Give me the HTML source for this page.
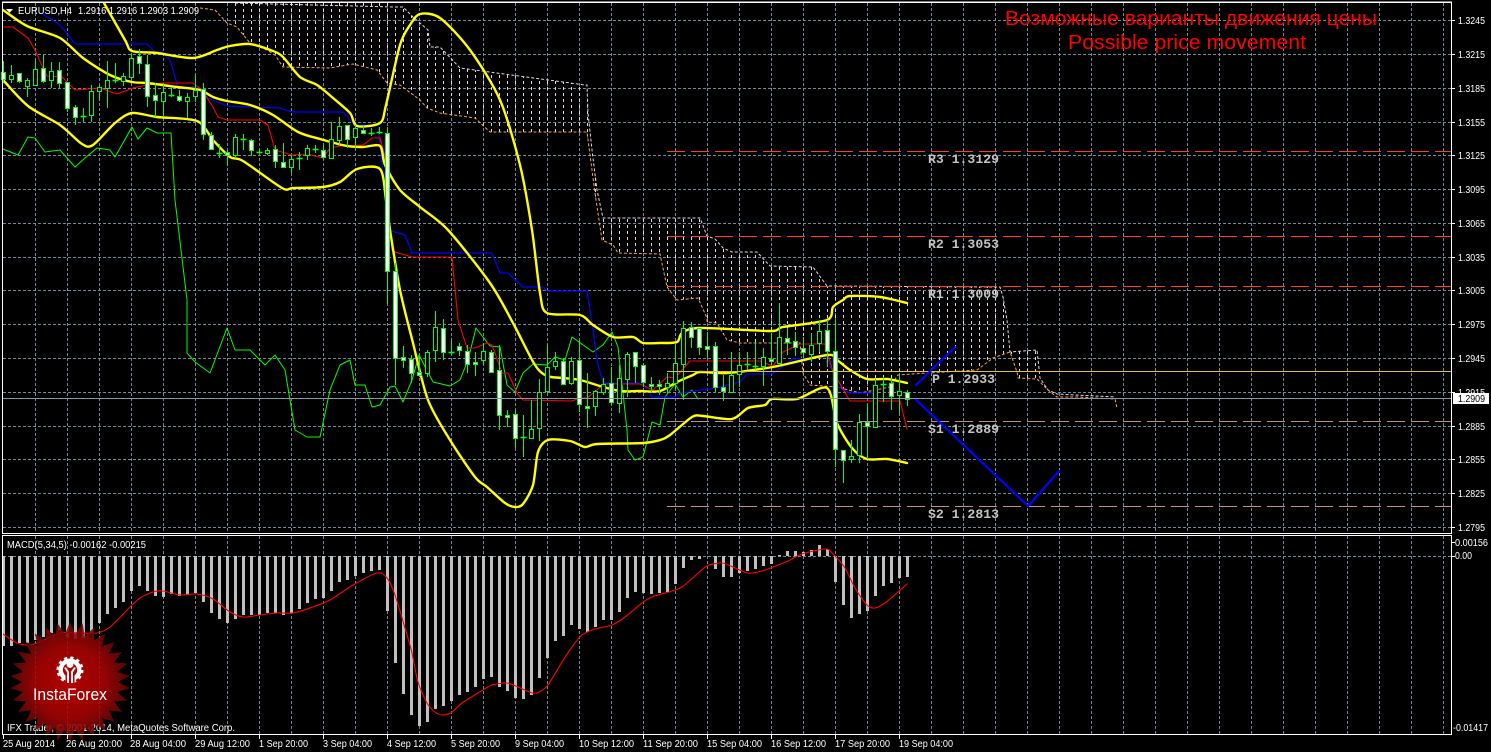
<!DOCTYPE html>
<html><head><meta charset="utf-8"><title>EURUSD,H4</title>
<style>
html,body{margin:0;padding:0;background:#000;width:1491px;height:752px;overflow:hidden}
svg{display:block}
text{font-family:"Liberation Sans",sans-serif;fill:#fff;font-size:10px}
.m{font-family:"Liberation Mono",monospace;font-weight:bold;font-size:13.3px;fill:#c4c4c4}
.t{font-size:20px;fill:#f00}
.l{fill:none;stroke-linejoin:round;stroke-linecap:round}
.y{stroke:#ff0;stroke-width:2.4}
.r{stroke:#f00;stroke-width:1.1}
.b{stroke:#00f;stroke-width:1.2}
.g{stroke:#0f0;stroke-width:1}
.c{fill:none;stroke-width:1;stroke-dasharray:3 2}
</style></head><body>
<svg xmlns="http://www.w3.org/2000/svg" width="1491" height="752" viewBox="0 0 1491 752">
<defs>
<clipPath id="cc"><polygon points="235,2 395,2 395,7 403,7 413,17 428,30 430,47 440,47 460,68 585,85 587,85 588,113 592,150 597,190 603,218 700,218 707,236 715,239 723,248 732,252 757,252 770,266 813,267 827,286 1000,287 1003,297 1007,320 1010,352 1037,350 1040,378 1018,378 1010,352 993,358 977,370 927,373 898,375 890,387 860,393 837,387 810,385 803,373 800,343 740,343 727,340 717,323 707,322 707,318 698,298 677,300 667,287 660,254 618,253 613,245 602,240 595,193 587,132 490,132 475,118 440,113 427,108 420,100 400,85 387,83 377,70 353,64 330,68 283,67 275,55 267,50 250,43 237,27 235,26"/></clipPath>
<radialGradient id="lg" cx="50%" cy="50%" r="50%"><stop offset="0" stop-color="#cc0000"/><stop offset=".6" stop-color="#a80404"/><stop offset="1" stop-color="#5e0808"/></radialGradient>
</defs>
<rect width="1491" height="752" fill="#000"/>
<g id="grid" stroke="#778899" stroke-width="1" stroke-dasharray="3 2"></g>
<g id="cloud" clip-path="url(#cc)" stroke="#e6d4e4" stroke-width="1" stroke-dasharray="3 3"></g>
<polyline class="c" stroke="#e6d4e4" points="235,3 395,7 403,7 413,17 428,30 430,47 440,47 460,68 585,85 587,85 588,113 592,150 597,190 603,218 700,218 707,236 715,239 723,248 732,252 757,252 770,266 813,267 827,286 1000,287 1003,297 1007,320 1010,352 1037,350 1040,378 1048,390 1057,394 1115,397"/>
<polyline class="c" stroke="#f4a460" points="200,8 215,10 227,23 237,27 250,43 267,50 275,55 283,67 330,68 353,64 377,70 387,83 400,85 420,100 427,108 440,113 475,118 490,132 587,132 595,193 602,240 613,245 618,253 660,254 667,287 677,300 698,298 707,318 707,322 717,323 727,340 740,343 800,343 803,373 810,385 837,387 860,393 890,387 898,375 927,373 977,370 993,358 1010,352 1017,372 1018,378 1037,379 1048,390 1057,397 1077,397 1115,399 1117,408"/>
<polyline class="l g" points="3,149 18,155 28,137 35,138 45,152 60,150 75,167 85,158 97,148 110,150 115,157 132,127 138,139 147,128 157,133 171,133 175,200 187,300 187,353 195,362 210,373 227,328 235,350 250,350 265,365 275,355 285,370 295,430 307,437 320,437 330,390 340,365 350,360 355,385 365,385 372,407 380,405 390,387 395,386 403,402 412,380 419,355 433,382 450,386 460,380 468,360 476,328 490,346 500,347 507,385 515,392 523,373 533,364 547,365 555,357 565,360 572,337 593,352 603,345 612,332 618,347 627,430 628,450 635,460 643,457 652,422 660,425 665,397 675,384 683,397 692,390 698,399"/>
<polyline class="l b" points="43,14 60,25 75,44 147,44 155,52 163,52 170,60 178,87 197,87 208,98 227,106 280,108 292,112 343,112 355,125 378,125 383,173 390,230 395,232 405,235 412,253 492,253 500,273 508,273 523,287 543,287 547,291 587,291 592,323 597,360 603,383 643,383 652,397 675,397 680,393 715,388 740,382 747,374 772,374 793,359 827,357 838,387 850,393 873,393"/>
<polyline class="l r" points="3,27 13,27 28,38 35,50 43,68 47,76 62,77 75,90 100,88 117,94 133,88 147,85 163,83 193,83 202,90 213,107 218,117 227,120 260,120 268,125 275,150 292,155 307,154 323,158 330,148 340,146 363,145 372,138 380,138 385,157 392,250 395,252 412,257 452,257 458,320 467,348 475,348 487,343 492,345 495,353 502,373 508,373 517,393 523,400 572,401 580,398 587,398 597,390 603,384 640,384 653,390 667,377 675,378 690,361 760,361 773,366 783,352 800,344 825,344 833,372 850,401 900,401 907,429"/>
<polyline class="l y s" points="3,10 27,26 60,38 83,58 110,75 132,82 147,83 177,87 200,90 213,97 227,101 250,105 273,115 298,132 320,139 347,146 363,147 380,146 385,165 400,190 420,207 448,230 490,283 513,323 535,365 547,376 563,378 580,380 600,386 620,391 640,391 660,391 677,382 693,375 700,372 727,373 773,367 827,355 837,360 850,370 867,379 887,379 907,383"/>
<polyline class="l y s" points="104,3 125,40 132,51 157,53 193,58 217,50 230,46 250,44 273,51 283,57 300,77 317,85 333,98 350,113 357,126 380,123 386,105 400,45 410,25 420,14 440,18 470,50 500,100 520,165 532,230 540,293 547,313 580,315 593,325 613,337 633,337 643,343 660,343 677,342 682,333 700,328 770,331 783,327 827,320 833,307 843,300 850,296 880,297 907,303"/>
<polyline class="l y s" points="3,80 28,106 60,125 82,144 93,145 115,123 132,113 157,117 197,121 213,140 230,157 243,161 282,188 293,188 323,187 340,182 357,169 380,169 386,200 390,230 400,290 413,343 428,400 450,440 475,477 487,487 505,503 515,507 523,504 533,485 538,452 548,440 570,441 585,447 597,444 643,443 660,440 670,435 692,417 703,416 732,419 748,408 765,405 772,399 797,399 827,388 837,423 852,448 867,459 887,459 907,463"/>
<g id="candles"></g>
<g fill="none" stroke-dasharray="18 6" stroke-width="1">
<path d="M667 151.5H1451M667 236.5H1451M667 286.5H1451" stroke="#ff4500"/>
<path d="M667 421.5H1451M667 506.5H1451" stroke="#c09088"/>
</g>
<path d="M667 371.5H1451" stroke="#e6c228" stroke-width="1"/>
<path d="M3 398.5H1451" stroke="#8a97a8" stroke-width="1"/>
<g class="l" stroke="#0000ff" stroke-width="2.2"><path d="M916 385L955 347"/><path d="M916 400L1028 506L1059 471"/></g>
<text class="m" x="928" y="163" textLength="71" lengthAdjust="spacingAndGlyphs">R3 1.3129</text>
<text class="m" x="928" y="248" textLength="71" lengthAdjust="spacingAndGlyphs">R2 1.3053</text>
<text class="m" x="928" y="298" textLength="71" lengthAdjust="spacingAndGlyphs">R1 1.3009</text>
<text class="m" x="932" y="383" textLength="63" lengthAdjust="spacingAndGlyphs">P 1.2933</text>
<text class="m" x="928" y="433" textLength="71" lengthAdjust="spacingAndGlyphs">S1 1.2889</text>
<text class="m" x="928" y="518" textLength="71" lengthAdjust="spacingAndGlyphs">S2 1.2813</text>
<text class="t" x="1005" y="25" textLength="372" lengthAdjust="spacingAndGlyphs">Возможные варианты движения цены</text>
<text class="t" x="1068" y="49" textLength="238" lengthAdjust="spacingAndGlyphs">Possible price movement</text>
<polygon points="6,9 13,9 9.5,13" fill="#fff"/>
<text x="18" y="14" textLength="54" lengthAdjust="spacingAndGlyphs">EURUSD,H4</text>
<text x="78" y="14" textLength="121" lengthAdjust="spacingAndGlyphs">1.2916 1.2916 1.2903 1.2909</text>
<g id="hist" fill="#c0c0c0"></g>
<polyline class="l r s" points="3,634 17,643 28,645 40,642 60,633 80,633 97,633 110,627 130,607 140,598 153,592 163,591 180,595 197,594 213,599 230,612 243,617 260,615 277,613 293,613 310,608 330,600 353,585 377,573 387,578 395,595 405,628 412,653 418,682 427,703 435,712 443,715 452,712 462,703 483,690 492,685 507,683 518,687 532,693 539,692 548,685 562,662 572,647 582,635 595,629 612,625 625,617 642,603 652,597 672,591 682,587 695,576 707,566 722,563 735,568 748,573 762,571 788,561 802,554 825,549 832,553 845,568 855,588 867,605 875,608 885,603 898,592 907,584"/>
<text x="7" y="548" textLength="139" lengthAdjust="spacingAndGlyphs">MACD(5,34,5) -0.00162 -0.00215</text>
<text x="7" y="731" textLength="228" lengthAdjust="spacingAndGlyphs">IFX Trader, © 2001-2014, MetaQuotes Software Corp.</text>
<polygon id="star" fill="url(#lg)" opacity=".88"/>
<g>
<circle cx="70" cy="670" r="9.3" fill="none" stroke="#fff" stroke-width="4.4"/>
<circle cx="70" cy="670" r="12" fill="none" stroke="#fff" stroke-width="3" stroke-dasharray="3.1 3.18"/>
<rect x="65.5" y="672" width="9" height="12" fill="#b80202"/>
<circle cx="70" cy="664.5" r="3.4" fill="#fff"/>
<path d="M65 667.5L68 672V683M75 667.5L72 672V683" fill="none" stroke="#fff" stroke-width="2"/>
</g>
<text x="33" y="700" style="font-size:17px" textLength="74" lengthAdjust="spacingAndGlyphs">InstaForex</text>
<g fill="none" stroke="#fff" stroke-width="1">
<path d="M2.5 2V533.5H1451.5V2Z"/>
<path d="M2.5 535.5V734.5H1451.5V535.5Z"/>
<path d="M2 2.5H1452M2 533.5H1452M2 535.5H1452"/>
</g>
<g id="ticks" stroke="#fff" stroke-width="1"></g>
<g>
<text x="1458" y="24" textLength="27" lengthAdjust="spacingAndGlyphs">1.3245</text>
<text x="1458" y="58" textLength="27" lengthAdjust="spacingAndGlyphs">1.3215</text>
<text x="1458" y="92" textLength="27" lengthAdjust="spacingAndGlyphs">1.3185</text>
<text x="1458" y="126" textLength="27" lengthAdjust="spacingAndGlyphs">1.3155</text>
<text x="1458" y="159" textLength="27" lengthAdjust="spacingAndGlyphs">1.3125</text>
<text x="1458" y="193" textLength="27" lengthAdjust="spacingAndGlyphs">1.3095</text>
<text x="1458" y="227" textLength="27" lengthAdjust="spacingAndGlyphs">1.3065</text>
<text x="1458" y="261" textLength="27" lengthAdjust="spacingAndGlyphs">1.3035</text>
<text x="1458" y="294" textLength="27" lengthAdjust="spacingAndGlyphs">1.3005</text>
<text x="1458" y="328" textLength="27" lengthAdjust="spacingAndGlyphs">1.2975</text>
<text x="1458" y="362" textLength="27" lengthAdjust="spacingAndGlyphs">1.2945</text>
<text x="1458" y="396" textLength="27" lengthAdjust="spacingAndGlyphs">1.2915</text>
<text x="1458" y="430" textLength="27" lengthAdjust="spacingAndGlyphs">1.2885</text>
<text x="1458" y="463" textLength="27" lengthAdjust="spacingAndGlyphs">1.2855</text>
<text x="1458" y="497" textLength="27" lengthAdjust="spacingAndGlyphs">1.2825</text>
<text x="1458" y="531" textLength="27" lengthAdjust="spacingAndGlyphs">1.2795</text>
<rect x="1453" y="393" width="36" height="11" fill="#fff"/>
<text x="1458" y="402" style="fill:#000" textLength="27" lengthAdjust="spacingAndGlyphs">1.2909</text>
<text x="1455" y="546" textLength="33" lengthAdjust="spacingAndGlyphs">0.00156</text>
<text x="1455" y="559" textLength="17" lengthAdjust="spacingAndGlyphs">0.00</text>
<text x="1453" y="731" textLength="35" lengthAdjust="spacingAndGlyphs">-0.01417</text>
</g>
<g>
<text x="3" y="747" textLength="52" lengthAdjust="spacingAndGlyphs">25 Aug 2014</text>
<text x="66" y="747" textLength="56" lengthAdjust="spacingAndGlyphs">26 Aug 20:00</text>
<text x="130" y="747" textLength="56" lengthAdjust="spacingAndGlyphs">28 Aug 04:00</text>
<text x="195" y="747" textLength="55" lengthAdjust="spacingAndGlyphs">29 Aug 12:00</text>
<text x="259" y="747" textLength="49" lengthAdjust="spacingAndGlyphs">1 Sep 20:00</text>
<text x="323" y="747" textLength="49" lengthAdjust="spacingAndGlyphs">3 Sep 04:00</text>
<text x="387" y="747" textLength="49" lengthAdjust="spacingAndGlyphs">4 Sep 12:00</text>
<text x="451" y="747" textLength="49" lengthAdjust="spacingAndGlyphs">5 Sep 20:00</text>
<text x="515" y="747" textLength="49" lengthAdjust="spacingAndGlyphs">9 Sep 04:00</text>
<text x="579" y="747" textLength="55" lengthAdjust="spacingAndGlyphs">10 Sep 12:00</text>
<text x="643" y="747" textLength="55" lengthAdjust="spacingAndGlyphs">11 Sep 20:00</text>
<text x="707" y="747" textLength="55" lengthAdjust="spacingAndGlyphs">15 Sep 04:00</text>
<text x="771" y="747" textLength="55" lengthAdjust="spacingAndGlyphs">16 Sep 12:00</text>
<text x="835" y="747" textLength="55" lengthAdjust="spacingAndGlyphs">17 Sep 20:00</text>
<text x="899" y="747" textLength="54" lengthAdjust="spacingAndGlyphs">19 Sep 04:00</text>
</g>
</svg>
<script>
(function(){
var NS="http://www.w3.org/2000/svg";
function el(p,n,a){var e=document.createElementNS(NS,n);for(var k in a)e.setAttribute(k,a[k]);p.appendChild(e);return e}
var $=function(i){return document.getElementById(i)};
var G=$("grid"),i;
[20,54,88,122,155,189,223,257,290,324,358,392,426,459,493,527].forEach(function(y){el(G,"path",{d:"M3 "+(y+.5)+"H1451"})});
el(G,"path",{d:"M3 556.5H1451"});
for(i=1;i<=45;i++){var x=3+32*i+.5;el(G,"path",{d:"M"+x+" 3V533M"+x+" 536V734"})}
var C=$("cloud");
for(i=29;i<=129;i++){var cx=3+8*i+.5;el(C,"path",{d:"M"+cx+" 3V400"})}
[].slice.call(document.querySelectorAll("polyline.s")).forEach(function(pl){
 var p=pl.getAttribute("points").trim().split(/\s+/).map(function(s){return s.split(",").map(Number)});
 var d="M"+p[0][0]+" "+p[0][1],k=0.14;
 for(var j=0;j<p.length-1;j++){
  var a=p[j-1]||p[j],b=p[j],c=p[j+1],e=p[j+2]||c;
  d+="C"+(b[0]+(c[0]-a[0])*k).toFixed(1)+" "+(b[1]+(c[1]-a[1])*k).toFixed(1)+" "+(c[0]-(e[0]-b[0])*k).toFixed(1)+" "+(c[1]-(e[1]-b[1])*k).toFixed(1)+" "+c[0]+" "+c[1];
 }
 var n=document.createElementNS(NS,"path");
 n.setAttribute("class",pl.getAttribute("class"));
 n.setAttribute("d",d);
 pl.parentNode.replaceChild(n,pl);
});
var D=[[61,83,72,79,1],[65,83,75,79,0],[73,83,73,81,1],[78,97,80,86,0],[60,86,69,85,0],[55,83,68,81,1],[62,88,71,80,0],[62,88,70,83,1],[82,112,82,108,1],[105,125,107,117,1],[108,122,116,116,2],[85,122,91,115,0],[85,101,87,91,0],[61,108,80,88,0],[63,83,80,80,2],[73,86,76,81,0],[53,78,58,77,0],[49,74,56,63,1],[55,107,64,96,1],[83,117,95,100,1],[83,117,92,101,0],[87,97,95,95,2],[90,102,96,100,1],[93,118,97,101,0],[75,102,90,96,0],[83,140,89,134,1],[132,150,135,149,1],[144,158,153,153,2],[150,165,152,155,1],[134,158,137,155,0],[134,150,139,139,2],[139,156,140,150,1],[150,153,152,152,2],[148,155,150,153,0],[145,168,149,161,1],[143,168,162,167,1],[155,173,159,167,0],[152,170,158,158,2],[145,160,148,155,0],[145,153,149,149,2],[145,158,150,157,1],[122,158,139,158,0],[117,145,126,140,0],[125,148,125,139,1],[125,148,128,137,0],[125,133,130,133,1],[128,136,133,133,2],[127,134,132,132,2],[127,304,133,271,1],[263,385,271,358,1],[346,368,357,360,1],[355,383,359,373,1],[357,377,372,375,1],[350,377,352,373,0],[311,362,327,350,0],[319,360,328,352,1],[340,355,352,352,2],[343,356,346,350,1],[345,373,351,364,1],[352,376,362,364,1],[343,365,351,360,0],[350,373,352,372,1],[345,430,370,415,1],[410,427,415,417,1],[410,448,414,438,1],[415,457,437,437,2],[400,438,429,438,0],[379,441,392,428,0],[345,393,367,391,0],[352,370,361,366,0],[358,385,361,384,1],[357,385,361,383,0],[340,412,360,404,1],[373,428,406,408,1],[390,416,391,406,0],[378,395,384,392,0],[367,405,383,402,1],[365,413,378,403,0],[352,397,354,379,0],[352,383,352,366,1],[363,387,365,382,1],[377,393,384,386,1],[380,395,384,386,1],[373,393,383,387,0],[343,390,363,383,0],[321,400,328,364,0],[322,348,327,337,1],[328,355,328,347,1],[332,358,346,349,1],[342,392,346,387,1],[375,401,387,391,1],[352,393,375,392,0],[352,387,365,374,0],[352,370,364,364,2],[342,370,366,366,2],[348,386,357,366,0],[333,365,359,361,1],[303,364,337,363,0],[328,355,338,342,1],[332,356,341,347,1],[337,358,348,352,1],[333,362,345,354,0],[320,352,331,343,0],[320,367,330,351,1],[320,467,351,449,1],[450,483,450,460,1],[440,463,456,459,0],[414,463,422,455,0],[405,459,422,426,1],[378,428,385,427,0],[377,402,384,384,2],[378,410,383,396,1],[375,413,391,395,0],[390,406,392,399,1]];
var K=$("candles");
D.forEach(function(d,n){
 var cx=3+8*n+.5;
 el(K,"path",{d:"M"+cx+" "+d[0]+"V"+d[1],stroke:"#0f0","stroke-width":1});
 if(d[4]==2){el(K,"path",{d:"M"+(cx-3)+" "+(d[2]+.5)+"H"+(cx+3),stroke:"#0f0","stroke-width":1.6})}
 else{el(K,"rect",{x:cx-2,y:d[2]+.5,width:4,height:Math.max(d[3]-d[2],2),fill:d[4]?"#fff":"#000",stroke:"#0f0","stroke-width":1})}
});
var H=[646,646,643,643,640,637,633,630,637,639,638,633,623,614,608,602,591,586,591,596,597,594,596,595,593,602,613,619,623,619,615,615,615,613,613,615,613,609,603,599,598,591,582,580,576,573,571,570,611,663,694,715,726,722,709,706,701,695,692,687,679,677,687,691,698,699,695,678,658,641,636,625,629,632,627,620,620,612,598,592,593,594,593,592,584,568,560,559,556,569,577,577,573,571,569,566,564,555,551,551,552,550,545,549,582,605,618,614,611,596,586,583,578,577];
var B=$("hist");
H.forEach(function(v,n){
 if(v==556)return;
 var a=Math.min(v,556),b=Math.max(v,556);
 el(B,"rect",{x:3+8*n-1,y:a,width:3,height:b-a});
});
var pts=[],N=30,cxx=70,cyy=682;
for(i=0;i<N*2;i++){var r=i%2?48:60,t=Math.PI*i/N-Math.PI/2;pts.push((cxx+r*Math.cos(t)).toFixed(1)+","+(cyy+r*Math.sin(t)).toFixed(1))}
$("star").setAttribute("points",pts.join(" "));
var T=$("ticks");
[20,54,88,122,155,189,223,257,290,324,358,392,426,459,493,527,542,556].forEach(function(y){el(T,"path",{d:"M1451 "+(y+.5)+"H1455"})});
for(i=0;i<15;i++){var tx=3+64*i+.5;el(T,"path",{d:"M"+tx+" 734V739"})}
})();
</script>
</body></html>
